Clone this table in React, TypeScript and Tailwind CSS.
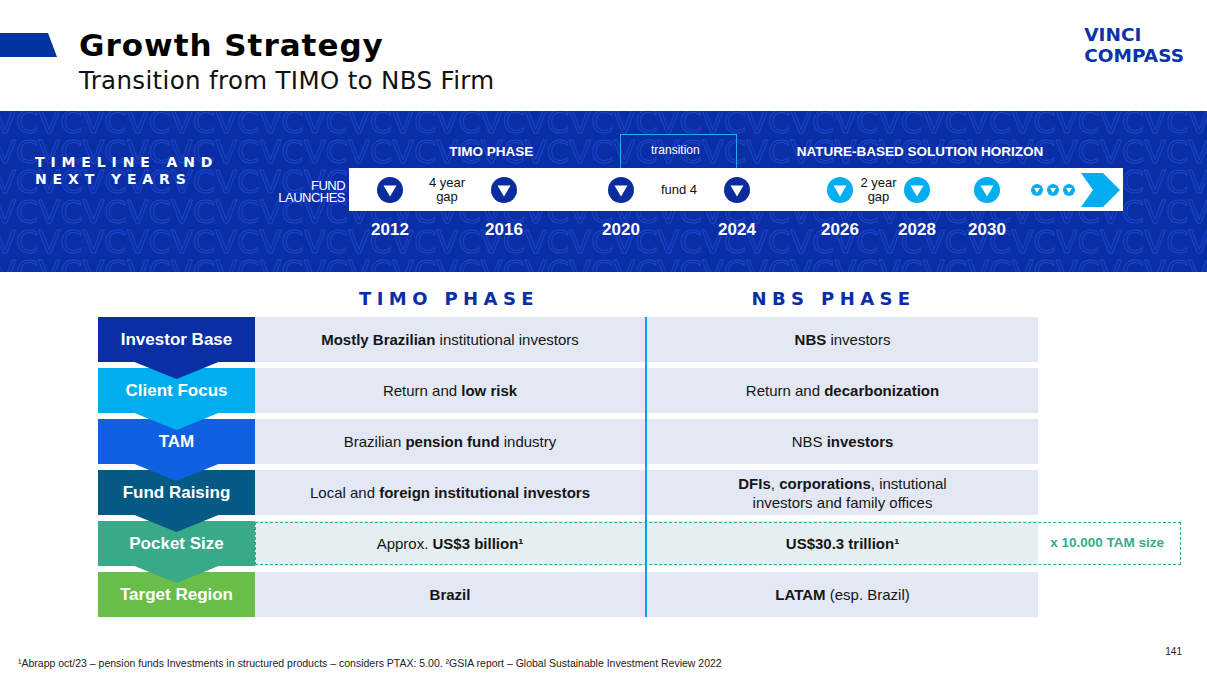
import React from 'react';

const DEJAVU = 'font-["DejaVu_Sans",sans-serif]';

type Row = {
  label: string;
  color: string;
  timo: React.ReactNode;
  nbs: React.ReactNode;
  pocket?: boolean;
};

const ROWS: Row[] = [
  {
    label: 'Investor Base',
    color: 'bg-[#0a2ea3]',
    timo: (
      <>
        <b>Mostly Brazilian</b> institutional investors
      </>
    ),
    nbs: (
      <>
        <b>NBS</b> investors
      </>
    ),
  },
  {
    label: 'Client Focus',
    color: 'bg-[#00aeef]',
    timo: (
      <>
        Return and <b>low risk</b>
      </>
    ),
    nbs: (
      <>
        Return and <b>decarbonization</b>
      </>
    ),
  },
  {
    label: 'TAM',
    color: 'bg-[#1060e2]',
    timo: (
      <>
        Brazilian <b>pension fund</b> industry
      </>
    ),
    nbs: (
      <>
        NBS <b>investors</b>
      </>
    ),
  },
  {
    label: 'Fund Raising',
    color: 'bg-[#045a84]',
    timo: (
      <>
        Local and <b>foreign institutional investors</b>
      </>
    ),
    nbs: (
      <>
        <b>DFIs</b>, <b>corporations</b>, instutional
        <br />
        investors and family offices
      </>
    ),
  },
  {
    label: 'Pocket Size',
    color: 'bg-[#39a98a]',
    pocket: true,
    timo: (
      <>
        Approx. <b>US$3 billion¹</b>
      </>
    ),
    nbs: <b>US$30.3 trillion¹</b>,
  },
  {
    label: 'Target Region',
    color: 'bg-[#69be4a]',
    timo: <b>Brazil</b>,
    nbs: (
      <>
        <b>LATAM</b> (esp. Brazil)
      </>
    ),
  },
];

function Marker({ light = false }: { light?: boolean }) {
  return (
    <svg width="26" height="26" viewBox="0 0 26 26" className="shrink-0">
      <circle cx="13" cy="13" r="13" fill={light ? '#00aeef' : '#0b2c9c'} />
      <polygon points="6.5,8.5 19.5,8.5 13,19.5" fill="#fff" />
    </svg>
  );
}

function SmallMarker() {
  return (
    <svg width="12" height="12" viewBox="0 0 12 12" className="shrink-0">
      <circle cx="6" cy="6" r="6" fill="#00aeef" />
      <polygon points="3,4 9,4 6,9" fill="#fff" />
    </svg>
  );
}

// faint "VC" monogram texture behind the timeline band
function Pattern() {
  const line = 'VC'.repeat(30);
  return (
    <div aria-hidden className="pointer-events-none absolute inset-0 select-none overflow-hidden">
      <div className={`-mt-[4px] -ml-[6px] ${DEJAVU} text-[32px] leading-[30px] whitespace-nowrap text-transparent [-webkit-text-stroke:1px_#1b45c8]`}>
        {Array.from({ length: 6 }).map((_, i) => (
          <div key={i}>{line}</div>
        ))}
      </div>
    </div>
  );
}

function Header() {
  return (
    <div className="flex h-[111px] items-start">
      <div className="mt-[33px] h-[24px] w-[57px] shrink-0 bg-[#0033a0] [clip-path:polygon(0_0,48px_0,100%_100%,0_100%)]" />
      <div className="ml-[22px] pt-[27px]">
        <h1 className={`${DEJAVU} text-[31px] font-bold leading-[36px] tracking-[0.032em] text-black`}>
          Growth Strategy
        </h1>
        <p className={`${DEJAVU} mt-[4px] text-[24.5px] leading-[28px] tracking-[0.014em] text-[#111]`}>
          Transition from TIMO to NBS Firm
        </p>
      </div>
      <div className={`ml-auto pr-[23px] pt-[24px] ${DEJAVU} text-[18.5px] font-bold leading-[21px] text-[#0a33a8]`}>
        <div>VINCI</div>
        <div>COMPASS</div>
      </div>
    </div>
  );
}

function Timeline() {
  const years: [string, number][] = [
    ['2012', 28],
    ['2016', 88],
    ['2020', 91],
    ['2024', 90],
    ['2026', 77],
    ['2028', 51],
    ['2030', 44],
  ];
  return (
    <div className="relative h-[161px] overflow-hidden bg-[#0a2ea5] text-white">
      <Pattern />
      <div className="relative flex">
        <div className="flex w-[349px] shrink-0">
          <div className={`pl-[35px] pt-[43px] ${DEJAVU} text-[14px] font-bold leading-[17px] tracking-[0.42em]`}>
            <div>TIMELINE AND</div>
            <div>NEXT YEARS</div>
          </div>
          <div className="ml-auto pr-[4px] pt-[69px] text-right font-['Liberation_Sans',Arial,sans-serif] text-[13px] leading-[12px] tracking-[-0.04em]">
            <div>FUND</div>
            <div>LAUNCHES</div>
          </div>
        </div>

        <div className="relative w-[774px] font-['Liberation_Sans',Arial,sans-serif]">
          <div className="absolute left-[271px] top-[23px] h-[54px] w-[117px] border-x border-t border-[#27aae2]" />

          <div className="flex pt-[33px] text-[13.5px] font-bold leading-[16px]">
            <div className="w-[286px] text-center">TIMO PHASE</div>
            <div className="-mt-[2px] w-[84px] text-center text-[12px] font-normal">transition</div>
            <div className="w-[408px] text-center">NATURE-BASED SOLUTION HORIZON</div>
          </div>

          <div className="relative mt-[8px] flex h-[43px] items-center bg-white text-[13px] leading-[14px] text-[#111]">
            <div className="w-[28px] shrink-0" />
            <Marker />
            <div className="w-[88px] shrink-0 text-center">
              4 year
              <br />
              gap
            </div>
            <Marker />
            <div className="w-[91px] shrink-0" />
            <Marker />
            <div className="w-[90px] shrink-0 text-center">fund 4</div>
            <Marker />
            <div className="w-[77px] shrink-0" />
            <Marker light />
            <div className="w-[51px] shrink-0 text-center">
              2 year
              <br />
              gap
            </div>
            <Marker light />
            <div className="w-[44px] shrink-0" />
            <Marker light />
            <div className="w-[31px] shrink-0" />
            <div className="flex gap-[4px]">
              <SmallMarker />
              <SmallMarker />
              <SmallMarker />
            </div>
            <div className="w-[6px] shrink-0" />
            <svg width="39" height="34" viewBox="0 0 39 34" className="shrink-0">
              <polygon points="0,0 22,0 39,17 22,34 0,34 12,17" fill="#00aeef" />
            </svg>
          </div>

          <div className="mt-[10px] flex text-[17px] font-bold leading-[18px]">
            {years.map(([y, gap]) => (
              <React.Fragment key={y}>
                <div className="shrink-0" style={{ width: gap }} />
                <div className="flex w-[26px] shrink-0 justify-center whitespace-nowrap">{y}</div>
              </React.Fragment>
            ))}
          </div>
        </div>
      </div>
    </div>
  );
}

function Comparison() {
  return (
    <div className="pl-[98px] pt-[16px] font-['Liberation_Sans',Arial,sans-serif]">
      <div className={`flex ${DEJAVU} text-[18px] font-bold leading-[22px] tracking-[0.3em] text-[#0a2ea5]`}>
        <div className="w-[157px]" />
        <div className="w-[390px] pr-[2px] text-center">TIMO PHASE</div>
        <div className="w-[2px]" />
        <div className="w-[391px] pr-[18px] text-center">NBS PHASE</div>
      </div>

      <div className="relative mt-[7px] flex">
        <div className="flex w-[157px] flex-col gap-[6px]">
          {ROWS.map((r, i) => (
            <div key={r.label} className={`relative flex h-[45px] items-center justify-center ${r.color}`}>
              <span className="text-[17px] font-bold text-white">{r.label}</span>
              {i < ROWS.length - 1 && (
                <div
                  className={`absolute left-1/2 top-full z-10 h-[17px] w-[84px] -translate-x-1/2 [clip-path:polygon(0_0,100%_0,50%_100%)] ${r.color}`}
                />
              )}
            </div>
          ))}
        </div>

        <div className="flex w-[390px] flex-col gap-[6px]">
          {ROWS.map((r) => (
            <div
              key={r.label}
              className={`flex h-[45px] items-center justify-center text-center text-[15px] leading-[19px] text-[#161616] ${r.pocket ? 'bg-[#e5eef1]' : 'bg-[#e3e8f4]'}`}
            >
              <span>{r.timo}</span>
            </div>
          ))}
        </div>

        <div className="w-[2px] bg-[#00a3e0]" />

        <div className="flex w-[391px] flex-col gap-[6px]">
          {ROWS.map((r) => (
            <div
              key={r.label}
              className={`flex h-[45px] items-center justify-center text-center text-[15px] leading-[19px] text-[#161616] ${r.pocket ? 'bg-[#e5eef1]' : 'bg-[#e3e8f4]'}`}
            >
              <span>{r.nbs}</span>
            </div>
          ))}
        </div>

        <div className="pointer-events-none absolute left-[157px] top-[205px] flex h-[43px] w-[926px] items-center justify-end border border-dashed border-[#34ad8a] pr-[16px]">
          <span className="text-[13.5px] font-bold text-[#34ad8a]">x 10.000 TAM size</span>
        </div>
      </div>
    </div>
  );
}

export default function App() {
  return (
    <div className="h-[679px] w-[1207px] overflow-hidden bg-white">
      <Header />
      <Timeline />
      <Comparison />
      <div className="mt-[29px] flex justify-end pr-[25px] font-['Liberation_Sans',Arial,sans-serif] text-[10px] leading-[12px] text-[#222]">
        141
      </div>
      <p className="-mt-[1px] pl-[18px] font-['Liberation_Sans',Arial,sans-serif] text-[10.5px] leading-[12px] text-[#222]">
        ¹Abrapp oct/23 – pension funds Investments in structured products – considers PTAX: 5.00. ²GSIA report – Global
        Sustainable Investment Review 2022
      </p>
    </div>
  );
}
